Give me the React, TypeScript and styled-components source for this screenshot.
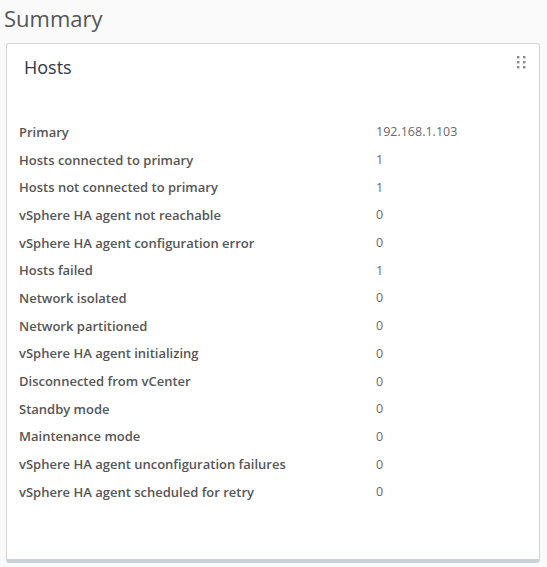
import React from "react";
import styled, { createGlobalStyle } from "styled-components";

const Global = createGlobalStyle`
  html, body { margin: 0; padding: 0; background: #fafafa; }
  body { font-family: "Open Sans", "Liberation Sans", sans-serif; }
`;

const Page = styled.div`
  width: 547px;
  height: 567px;
  box-sizing: border-box;
  padding: 0 7px 0 6px;
  display: flex;
  flex-direction: column;
  background: #fafafa;
`;

const Title = styled.h1`
  margin: 3px 0 0 -2px;
  font-family: "Open Sans", sans-serif;
  font-weight: 400;
  font-size: 22px;
  line-height: 30px;
  color: #565656;
`;

const Card = styled.section`
  position: relative;
  margin-top: 10px;
  height: 520px;
  box-sizing: border-box;
  background: #fff;
  border: 1px solid #d4d4d4;
  border-bottom: 4px solid #c9d2d8;
  border-radius: 3px;
  padding: 9px 12px 0 12px;
`;

const CardTitle = styled.h2`
  margin: 0 0 0 5px;
  font-family: "Open Sans", sans-serif;
  font-weight: 400;
  font-size: 18px;
  line-height: 28px;
  color: #313848;
`;

const Handle = styled.svg`
  position: absolute;
  top: 12px;
  right: 13px;
`;

const Rows = styled.dl`
  margin: 37px 0 0 0;
  display: grid;
  grid-template-columns: 357px 1fr;
  grid-auto-rows: 27.7px;
  align-items: center;
`;

const Label = styled.dt`
  font-family: "Open Sans", sans-serif;
  font-weight: 600;
  font-size: 13px;
  color: #565656;
`;

const Value = styled.dd`
  margin: 0;
  font-family: "Open Sans", sans-serif;
  font-weight: 400;
  font-size: 12.5px;
  color: #6a6a6a;
`;

const rows: [string, string][] = [
  ["Primary", "192.168.1.103"],
  ["Hosts connected to primary", "1"],
  ["Hosts not connected to primary", "1"],
  ["vSphere HA agent not reachable", "0"],
  ["vSphere HA agent configuration error", "0"],
  ["Hosts failed", "1"],
  ["Network isolated", "0"],
  ["Network partitioned", "0"],
  ["vSphere HA agent initializing", "0"],
  ["Disconnected from vCenter", "0"],
  ["Standby mode", "0"],
  ["Maintenance mode", "0"],
  ["vSphere HA agent unconfiguration failures", "0"],
  ["vSphere HA agent scheduled for retry", "0"],
];

export default function App() {
  return (
    <>
      <Global />
      <Page>
        <Title>Summary</Title>
        <Card>
          <CardTitle>Hosts</CardTitle>
          <Handle width="9" height="13" viewBox="0 0 9 13">
            {[0, 5, 10].map((y) =>
              [0, 6].map((x) => (
                <rect key={`${x}-${y}`} x={x} y={y} width="2.4" height="2.4" fill="#8a8a8a" />
              ))
            )}
          </Handle>
          <Rows>
            {rows.map(([l, v]) => (
              <React.Fragment key={l}>
                <Label>{l}</Label>
                <Value>{v}</Value>
              </React.Fragment>
            ))}
          </Rows>
        </Card>
      </Page>
    </>
  );
}
